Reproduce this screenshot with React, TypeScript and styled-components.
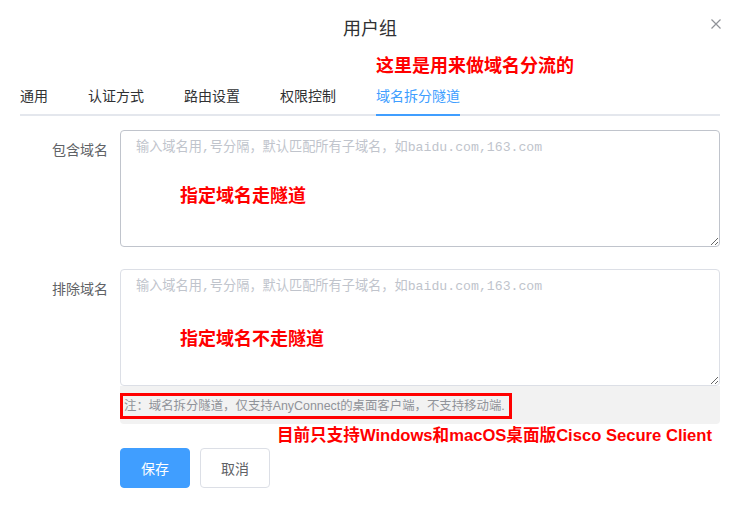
import styled, { createGlobalStyle } from 'styled-components';

const GlobalStyle = createGlobalStyle`
  html, body {
    margin: 0;
    padding: 0;
    background: #ffffff;
  }
  body {
    font-family: "Liberation Sans", "Noto Sans CJK SC", sans-serif;
    font-size: 14px;
    color: #303133;
  }
  * {
    box-sizing: border-box;
  }
`;

const tabs = ['通用', '认证方式', '路由设置', '权限控制', '域名拆分隧道'];

const placeholder = '输入域名用,号分隔，默认匹配所有子域名，如baidu.com,163.com';

export default function App() {
  return (
    <>
      <GlobalStyle />
      <Dialog>
        <Header>
          <span />
          <Title>用户组</Title>
          <CloseButton aria-label="关闭">
            <svg width="10" height="10" viewBox="0 0 10 10">
              <path d="M0.5 0.5 L9.5 9.5 M9.5 0.5 L0.5 9.5" stroke="#909399" strokeWidth="1.2" />
            </svg>
          </CloseButton>
        </Header>

        <TopNote>这里是用来做域名分流的</TopNote>

        <TabNav>
          {tabs.map((t, i) => (
            <TabItem key={t} $active={i === tabs.length - 1}>
              <TabLabel $active={i === tabs.length - 1}>{t}</TabLabel>
            </TabItem>
          ))}
        </TabNav>

        <Form>
          <FormItem>
            <Label>包含域名</Label>
            <Field>
              <TextArea $hovered placeholder={placeholder} />
              <Mark $top={52}>指定域名走隧道</Mark>
            </Field>
          </FormItem>

          <FormItem $last>
            <Label>排除域名</Label>
            <Field>
              <TextArea placeholder={placeholder} />
              <Mark $top={56}>指定域名不走隧道</Mark>
              <Tip>
                <TipBox>注：域名拆分隧道，仅支持AnyConnect的桌面客户端，不支持移动端.</TipBox>
              </Tip>
            </Field>
          </FormItem>

          <NoteRow>目前只支持Windows和macOS桌面版Cisco Secure Client</NoteRow>

          <Actions>
            <Button $primary>保存</Button>
            <Button>取消</Button>
          </Actions>
        </Form>
      </Dialog>
    </>
  );
}

const Dialog = styled.div`
  width: 736px;
  height: 530px;
  padding: 0 16px 0 20px;
`;

const Header = styled.div`
  display: grid;
  grid-template-columns: 1fr auto 1fr;
  padding: 17px 0 11px;
`;

const Title = styled.div`
  font-size: 18px;
  line-height: 24px;
  color: #303133;
`;

const CloseButton = styled.button`
  justify-self: end;
  align-self: start;
  margin-top: 2px;
  margin-right: -1px;
  padding: 0;
  border: none;
  background: transparent;
  width: 10px;
  height: 10px;
  display: flex;
  cursor: pointer;
`;

const TopNote = styled.div`
  padding-left: 356px;
  font-size: 18px;
  line-height: 24px;
  font-weight: 700;
  color: #ff0000;
  font-family: "Noto Sans CJK SC", sans-serif;
`;

const TabNav = styled.div`
  display: flex;
  box-shadow: inset 0 -2px 0 #e4e7ed;
`;

const TabItem = styled.div<{ $active?: boolean }>`
  padding: 0 20px;
  height: 40px;
  line-height: 40px;
  font-size: 14px;
  color: ${(p) => (p.$active ? '#409eff' : '#303133')};

  &:first-child {
    padding-left: 0;
  }
  &:last-child {
    padding-right: 0;
  }
`;

const TabLabel = styled.span<{ $active?: boolean }>`
  display: inline-block;
  height: 40px;
  box-shadow: ${(p) => (p.$active ? 'inset 0 -2px 0 #409eff' : 'none')};
`;

const Form = styled.div`
  padding-top: 14px;
`;

const FormItem = styled.div<{ $last?: boolean }>`
  display: flex;
  margin-bottom: ${(p) => (p.$last ? '0' : '22px')};
`;

const Label = styled.label`
  width: 100px;
  flex-shrink: 0;
  padding-right: 12px;
  text-align: right;
  line-height: 40px;
  font-size: 14px;
  color: #606266;
`;

const Field = styled.div`
  flex: 1;
  position: relative;
`;

const TextArea = styled.textarea<{ $hovered?: boolean }>`
  display: block;
  width: 100%;
  height: 117px;
  padding: 7px 15px 5px;
  border: 1px solid ${(p) => (p.$hovered ? '#c0c4cc' : '#dcdfe6')};
  border-radius: 4px;
  font-family: "Liberation Mono", "Noto Sans CJK SC", monospace;
  font-size: 13.2px;
  line-height: 20px;
  color: #606266;
  resize: vertical;
  outline: none;

  &::placeholder {
    color: #c0c4cc;
  }
`;

const Mark = styled.div<{ $top: number }>`
  position: absolute;
  left: 60px;
  top: ${(p) => p.$top}px;
  font-family: "Noto Sans CJK SC", sans-serif;
  font-size: 18px;
  line-height: 24px;
  font-weight: 700;
  color: #ff0000;
  pointer-events: none;
`;

const Tip = styled.div`
  background: #f2f2f2;
  border-radius: 0 0 4px 4px;
  padding: 7px 0 5px;
`;

const TipBox = styled.span`
  display: inline-block;
  border: 3px solid #ff0000;
  padding: 0 4px 0 1px;
  font-size: 12.4px;
  line-height: 20px;
  color: #909399;
`;

const NoteRow = styled.div`
  display: flex;
  justify-content: flex-end;
  padding-right: 8px;
  font-family: "Liberation Sans", "Noto Sans CJK SC", sans-serif;
  font-size: 16.6px;
  line-height: 24px;
  font-weight: 700;
  color: #ff0000;
`;

const Actions = styled.div`
  display: flex;
  gap: 10px;
  padding-left: 100px;
`;

const Button = styled.button<{ $primary?: boolean }>`
  height: 40px;
  padding: 0 20px;
  border-radius: 4px;
  font-family: "Liberation Sans", "Noto Sans CJK SC", sans-serif;
  font-size: 14px;
  border: 1px solid ${(p) => (p.$primary ? '#409eff' : '#dcdfe6')};
  background: ${(p) => (p.$primary ? '#409eff' : '#ffffff')};
  color: ${(p) => (p.$primary ? '#ffffff' : '#606266')};
  cursor: pointer;
`;
